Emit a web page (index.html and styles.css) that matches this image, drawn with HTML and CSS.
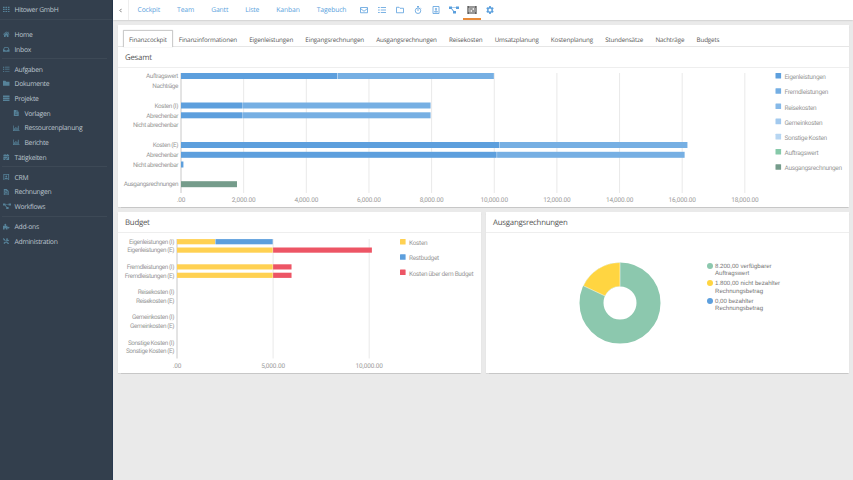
FILE: index.html
```html
<!DOCTYPE html>
<html lang="de">
<head>
  <meta charset="UTF-8" />
  <meta name="viewport" content="width=device-width, initial-scale=1.0" />
  <title>Hitower GmbH - Finanzcockpit</title>
  <link rel="stylesheet" href="styles.css">
</head>
<body>
  <div class="app">
    <aside class="sidebar">
      <div class="brand">
        <svg class="icon" viewBox="0 0 16 16"><path d="M0 2h4v3H0zM6 2h4v3H6zM12 2h4v3h-4zM0 7h4v3H0zM6 7h4v3H6zM12 7h4v3h-4zM0 12h4v3H0zM6 12h4v3H6zM12 12h4v3h-4z"/></svg>
        <span>Hitower GmbH</span>
      </div>
      <nav class="menu">
        <a><svg class="icon" viewBox="0 0 16 16"><path d="M8 1 0 8l1 1.200 7-6 7 6L16 8l-2.500-2.200V2h-2v2zM8 4.500 2.500 9.300V15h4v-4h3v4h4V9.300z"/></svg>Home</a>
        <a><svg class="icon" viewBox="0 0 16 16"><path fill-rule="evenodd" d="M3 3h10l3 6v5H0V9zM4.200 5 2.400 9H5l1 2h4l1-2h2.600l-1.800-4z"/></svg>Inbox</a>
      </nav>
      <nav class="menu">
        <a><svg class="icon" viewBox="0 0 16 16"><path d="M0 2h3v2H0zM5 2h11v1.700H5zM0 7h3v2H0zM5 7h11v1.700H5zM0 12h3v2H0zM5 12h11v1.700H5z"/></svg>Aufgaben</a>
        <a><svg class="icon" viewBox="0 0 16 16"><path d="M0 2h6l2 2h8v10H0z"/></svg>Dokumente</a>
        <a><svg class="icon" viewBox="0 0 16 16"><path d="M0 1h16v4H0zM0 6h16v4H0zM0 11h16v4H0z"/></svg>Projekte</a>
        <a class="sub"><svg class="icon" viewBox="0 0 16 16"><path fill-rule="evenodd" d="M2 0h7v5h5v11H2zM10 0l4 4h-4zM5 7v1.300h6V7zM5 10v1.300h6V10z"/></svg>Vorlagen</a>
        <a class="sub"><svg class="icon" viewBox="0 0 16 16"><path d="M0 1h1.600v12H16v1.600H0zM3 8h2v4H3zM6 5h2v7H6zM9 7h2v5H9zM12 2h2v10h-2z"/></svg>Ressourcenplanung</a>
        <a class="sub"><svg class="icon" viewBox="0 0 16 16"><path d="M0 1h1.600v12H16v1.600H0zM3 8h2v4H3zM6 5h2v7H6zM9 7h2v5H9zM12 2h2v10h-2z"/></svg>Berichte</a>
        <a><svg class="icon" viewBox="0 0 16 16"><path fill-rule="evenodd" d="M1 2h3V0h2v2h4V0h2v2h3v3H1zM1 6h14v10H1zM4.500 10 3.500 11l3.500 3.500 5.500-5.500-1-1L7 12.500z"/></svg>Tätigkeiten</a>
      </nav>
      <nav class="menu">
        <a><svg class="icon" viewBox="0 0 16 16"><path fill-rule="evenodd" d="M1 0h14v16H1zM3 2v12h10V2z"/><circle cx="8" cy="6" r="2.200"/><path d="M4 12c0-4 8-4 8 0z"/></svg>CRM</a>
        <a><svg class="icon" viewBox="0 0 16 16"><path fill-rule="evenodd" d="M2 0h7l5 5v11H2zM4 3v1.300h4V3zM4 6v5h8V6zM4 12.500v1.300h8v-1.300z"/><path d="M5 7.500h6v2H5z"/></svg>Rechnungen</a>
        <a><svg class="icon icon-wide" viewBox="0 0 20 16"><path d="M0 1h6v5H0zM14 1h6v5h-6zM8 10h6v5H8zM6 2.800h8v1.400H6zM4.500 6 6 5l4 5-1.500 1z"/></svg>Workflows</a>
      </nav>
      <nav class="menu">
        <a><svg class="icon" viewBox="0 0 16 16"><path d="M0 7h4c1-1-.5-2-.5-3.500C3.500 1 8 1 8 3.500 8 5 6.500 6 7.500 7H11v3c1 1 2-.5 3.200-.5 2.400 0 2.400 4 0 4-1.200 0-2.200-1.500-3.200-.5v3H7v-3H4v3H0z"/></svg>Add-ons</a>
        <a><svg class="icon" viewBox="0 0 16 16"><path d="M1 0 5 3v2l9 8.500-1.500 2L4 6H2L0 2zM15 4l-2 1-2-2 1-2C8 0 7 3 8.500 5.500L1 12.500 3.500 15l7-7.500C13 9 16 7 15 4zM10 9l5 4-2 3-5-5z"/></svg>Administration</a>
      </nav>
    </aside>

    <main class="content">
      <header class="topbar">
        <div class="collapse"><svg viewBox="0 0 6 8"><path d="M4.500 1 1.500 4l3 3"/></svg></div>
        <nav class="views">
          <a>Cockpit</a><a>Team</a><a>Gantt</a><a>Liste</a><a>Kanban</a><a>Tagebuch</a>
        </nav>
        <div class="tools">
          <a><svg viewBox="0 0 16 16"><path d="M1 3h14v10.500H1zM1 5l7 5.500L15 5"/></svg></a>
          <a><svg viewBox="0 0 16 16"><path d="M0 3h3.500M5.500 3H16M0 8h3.500M5.500 8H16M0 13h3.500M5.500 13H16"/></svg></a>
          <a><svg viewBox="0 0 16 16"><path d="M1 2.500h5l2 2h7v9H1z"/></svg></a>
          <a><svg viewBox="0 0 16 16"><circle cx="8" cy="9.500" r="5.500"/><path d="M8 6v4M6 1h4M8 1v3M12.500 3.500l1.500 1.500"/></svg></a>
          <a><svg viewBox="0 0 16 16"><path d="M2 1h12v14H2zM5 12c0-3 6-3 6 0z"/><circle cx="8" cy="6" r="1.500"/></svg></a>
          <a><svg class="wide" viewBox="0 0 20 16"><path class="solid" d="M0 1h6v5H0zM14 1h6v5h-6zM8 10h6v5H8zM6 2.800h8v1.400H6zM4.500 6 6 5l4 5-1.500 1z"/></svg></a>
          <a class="active"><svg class="wide" viewBox="0 0 18 16"><path d="M1 0v16M17 0v16M1 2h16M1 14h16M3.500 6h7M12.500 6h2.500M3.500 10h3M8.500 10h6.500"/></svg></a>
          <a><svg viewBox="0 0 16 16"><path class="solid" fill-rule="evenodd" d="M6.500 0h3l.5 2.300 1.500.8 2.200-.8 1.600 2.700L13.600 7v2l1.700 2-1.600 2.700-2.200-.8-1.500.8-.5 2.300h-3L6 13.700l-1.500-.8-2.200.8L.7 11l1.700-2V7L.7 5l1.600-2.700 2.200.8L6 2.300zM8 5a3 3 0 1 0 0 6 3 3 0 0 0 0-6z"/></svg></a>
        </div>
      </header>

      <div class="board">
        <section class="panel">
          <div class="tabs">
            <a class="active">Finanzcockpit</a><a>Finanzinformationen</a><a>Eigenleistungen</a><a>Eingangsrechnungen</a><a>Ausgangsrechnungen</a><a>Reisekosten</a><a>Umsatzplanung</a><a>Kostenplanung</a><a>Stundensätze</a><a>Nachträge</a><a>Budgets</a>
          </div>
          <h2>Gesamt</h2>
          <svg class="chart" id="gesamt" width="731" height="139"></svg>
        </section>
        <div class="row">
          <section class="panel budget">
            <h2>Budget</h2>
            <svg class="chart" id="budget" width="363" height="140"></svg>
          </section>
          <section class="panel invoices">
            <h2>Ausgangsrechnungen</h2>
            <div class="donut-wrap">
              <svg class="donut" viewBox="-41 -41 82 82">
                <circle class="avail" r="28.500"/>
                <path class="open" d="M0-40.500A40.500 40.500 0 0 0-36.650-17.240L-14.930-7.030A16.500 16.500 0 0 1 0-16.500z"/>
              </svg>
              <ul class="donut-legend">
                <li><i class="avail"></i>8.200,00 verfügbarer<br>Auftragswert</li>
                <li><i class="open"></i>1.800,00 nicht bezahlter<br>Rechnungsbetrag</li>
                <li><i class="paid"></i>0,00 bezahlter<br>Rechnungsbetrag</li>
              </ul>
            </div>
          </section>
        </div>
      </div>
    </main>
  </div>
  <script src="charts.js"></script>
</body>
</html>
```

FILE: styles.css
```css
* {
  box-sizing: border-box;
}
body {
  margin: 0;
  font-family: 'Open Sans', 'Liberation Sans', sans-serif;
  font-size: 6.8px;
  letter-spacing: -0.15px;
  text-rendering: geometricPrecision;
  color: #555;
  background: #eaeaea;
}
.app {
  display: flex;
  height: 480px;
  overflow: hidden;
}

/* sidebar */
.sidebar {
  width: 113px;
  flex: none;
  background: #333f4d;
  color: #bcc5cd;
  letter-spacing: -0.28px;
  border-right: 1px solid #293a50;
}
.brand {
  display: flex;
  align-items: center;
  height: 20px;
  padding: 0 0 1px 3px;
  border-bottom: 1px solid #3c4855;
}
.menu {
  margin: 0 5px 0 2px;
  padding: 2.3px 0 2px 1px;
  border-bottom: 1px solid #3d4956;
}
.brand + .menu {
  padding-top: 7px;
}
.menu:last-child {
  border-bottom: none;
}
.menu a {
  display: flex;
  align-items: center;
  height: 14.7px;
}
.menu a.sub {
  padding-left: 10px;
}
.icon {
  width: 6.5px;
  height: 6.5px;
  margin-right: 5px;
  fill: #568299;
  flex: none;
}
.icon-wide {
  width: 8px;
  margin-right: 3.5px;
}

/* top bar */
.content {
  flex: 1;
  min-width: 0;
}
.topbar {
  display: flex;
  height: 20px;
  background: #fff;
  color: #5a9fdd;
  box-shadow: 0 0 2px rgba(0, 0, 0, 0.25);
}
.collapse {
  display: flex;
  align-items: center;
  justify-content: center;
  width: 16px;
  border-right: 1px solid #eee;
}
.collapse svg {
  width: 3.5px;
  height: 5px;
  fill: none;
  stroke: #555;
  stroke-width: 1.3;
}
.views {
  display: flex;
  align-items: center;
  gap: 17.1px;
  width: 226px;
  padding: 0 0 1px 8.5px;
}
.tools {
  display: flex;
}
.tools a {
  display: flex;
  align-items: center;
  justify-content: center;
  width: 18px;
  padding-top: 1px;
  border-bottom: 2px solid transparent;
}
.tools a.active {
  color: #333;
  border-bottom: 2px solid #e88a38;
}
.tools svg {
  width: 8px;
  height: 8px;
  fill: none;
  stroke: currentColor;
  stroke-width: 1.6;
}
.tools svg.wide {
  width: 10px;
}
.tools .active svg {
  stroke-width: 2.1;
}
.tools .solid {
  fill: currentColor;
  stroke: none;
}

/* panels */
.board {
  padding: 5px 4px 0 5px;
}
.panel {
  background: #fff;
  box-shadow: 0 0.5px 1px rgba(0, 0, 0, 0.15);
}
.panel h2 {
  height: 21px;
  margin: 0;
  padding-left: 7px;
  font-size: 7.8px;
  font-weight: normal;
  letter-spacing: -0.22px;
  line-height: 22px;
  border-bottom: 1px solid #eee;
}
.tabs {
  display: flex;
  height: 22px;
  padding: 5px 0 0 5px;
  border-bottom: 1px solid #e6e6e6;
}
.tabs a {
  height: 17px;
  padding: 0 6.1px;
  line-height: 19.5px;
  font-size: 6.3px;
  letter-spacing: -0.16px;
}
.tabs a.active {
  padding: 0 5px;
  border: 1px solid #ccc;
  border-bottom: none;
  border-radius: 1px 1px 0 0;
  line-height: 18px;
  background: #fff;
  box-shadow: 0 0 1px rgba(0, 0, 0, 0.3);
}
.row {
  display: flex;
  gap: 5px;
  margin-top: 5px;
}
.row .panel {
  height: 161px;
}
.budget {
  width: 363px;
}
.invoices {
  flex: 1;
}

/* charts */
.chart {
  display: block;
  font-family: Roboto, 'Liberation Sans', sans-serif;
  font-size: 6.5px;
  letter-spacing: -0.14px;
}
.chart text {
  fill: #999;
}
.chart .label {
  font-size: 6.4px;
  letter-spacing: -0.42px;
}
.chart .key {
  letter-spacing: -0.32px;
}
.chart .grid {
  stroke: #e9e9e9;
}
.chart .axis {
  stroke: #c8c8c8;
}
.donut-wrap {
  display: flex;
  padding: 29px 0 0 93px;
}
.donut {
  width: 82px;
  height: 82px;
}
.donut circle {
  fill: none;
  stroke: #8cc8ae;
  stroke-width: 24;
}
.donut .open {
  fill: #ffd541;
  stroke: #fff;
  stroke-width: 0.5;
}
.donut-legend {
  margin: 0.6px 0 0 46px;
  padding: 0;
  list-style: none;
  font-family: 'Liberation Sans', Arial, sans-serif;
  font-size: 6.1px;
  letter-spacing: 0;
  line-height: 7.8px;
  color: #777;
}
.donut-legend li {
  position: relative;
  padding-left: 8px;
  margin-bottom: 1.9px;
}
.donut-legend i {
  position: absolute;
  left: 0;
  top: 0.4px;
  width: 6px;
  height: 6px;
  border-radius: 50%;
}
.donut-legend .avail {
  background: #8cc8ae;
}
.donut-legend .open {
  background: #ffd541;
}
.donut-legend .paid {
  background: #5d9fdd;
}
```

FILE: charts.js
```js
const NS = 'http://www.w3.org/2000/svg';

function add(svg, tag, attrs, text) {
  const el = document.createElementNS(NS, tag);
  for (const key in attrs) el.setAttribute(key, attrs[key]);
  if (text) el.textContent = text;
  svg.appendChild(el);
}

// rows: [label, y center, [value, color], ...]
function drawChart(id, opt) {
  const svg = document.getElementById(id);
  opt.ticks.forEach((tick, i) => {
    const x = opt.x0 + i * opt.step;
    add(svg, 'line', { class: i ? 'grid' : 'axis', x1: x, x2: x, y1: opt.top, y2: opt.bottom });
    add(svg, 'text', { x: x, y: opt.bottom + 9, 'text-anchor': 'middle' }, tick);
  });
  opt.rows.forEach(([label, y, ...parts]) => {
    add(svg, 'text', { class: 'label', x: opt.x0 - 3, y: y + 2.2, 'text-anchor': 'end' }, label);
    let x = opt.x0;
    parts.forEach(([value, color]) => {
      const w = value / opt.unit * opt.step;
      add(svg, 'rect', { x: x, y: y - opt.bar / 2, width: w - 0.4, height: opt.bar, fill: color });
      x += w;
    });
  });
  opt.legend.forEach(([label, color], i) => {
    const y = opt.legendY + i * 15.2;
    add(svg, 'rect', { x: opt.legendX, y: y, width: 5.6, height: 5.6, rx: 0.5, fill: color });
    add(svg, 'text', { class: 'key', x: opt.legendX + 9, y: y + 6.2 }, label);
  });
}

drawChart('gesamt', {
  x0: 63, step: 62.65, unit: 2000, top: 5, bottom: 125, bar: 6,
  legendX: 657.5, legendY: 5,
  ticks: ['.00', '2,000.00', '4,000.00', '6,000.00', '8,000.00', '10,000.00', '12,000.00', '14,000.00', '16,000.00', '18,000.00'],
  rows: [
    ['Auftragswert', 8, [5000, '#5d9fdd'], [5000, '#76afe3']],
    ['Nachträge', 17.8],
    ['Kosten (I)', 37.5, [1980, '#5d9fdd'], [6000, '#76afe3']],
    ['Abrechenbar', 47.3, [1980, '#5d9fdd'], [6000, '#76afe3']],
    ['Nicht abrechenbar', 57.2],
    ['Kosten (E)', 77, [10180, '#5d9fdd'], [6000, '#76afe3']],
    ['Abrechenbar', 86.8, [10090, '#5d9fdd'], [6000, '#76afe3']],
    ['Nicht abrechenbar', 96.5, [90, '#5d9fdd']],
    ['Ausgangsrechnungen', 116.2, [1800, '#759c8b']]
  ],
  legend: [
    ['Eigenleistungen', '#5d9fdd'],
    ['Fremdleistungen', '#74aee3'],
    ['Reisekosten', '#86b9e8'],
    ['Gemeinkosten', '#a2c9ee'],
    ['Sonstige Kosten', '#b7d6f2'],
    ['Auftragswert', '#86c9a9'],
    ['Ausgangsrechnungen', '#759c8b']
  ]
});

drawChart('budget', {
  x0: 59, step: 96.1, unit: 5000, top: 6, bottom: 125.5, bar: 5.2,
  legendX: 282, legendY: 6,
  ticks: ['.00', '5,000.00', '10,000.00'],
  rows: [
    ['Eigenleistungen (I)', 8.7, [2000, '#ffd152'], [3000, '#5d9fdd']],
    ['Eigenleistungen (E)', 17.1, [5000, '#ffd152'], [5160, '#ed5565']],
    ['Fremdleistungen (I)', 33.9, [5000, '#ffd152'], [980, '#ed5565']],
    ['Fremdleistungen (E)', 42.3, [5000, '#ffd152'], [980, '#ed5565']],
    ['Reisekosten (I)', 59],
    ['Reisekosten (E)', 67.4],
    ['Gemeinkosten (I)', 84.1],
    ['Gemeinkosten (E)', 92.6],
    ['Sonstige Kosten (I)', 109.3],
    ['Sonstige Kosten (E)', 117.6]
  ],
  legend: [
    ['Kosten', '#ffd152'],
    ['Restbudget', '#5d9fdd'],
    ['Kosten über dem Budget', '#ed5565']
  ]
});
```
